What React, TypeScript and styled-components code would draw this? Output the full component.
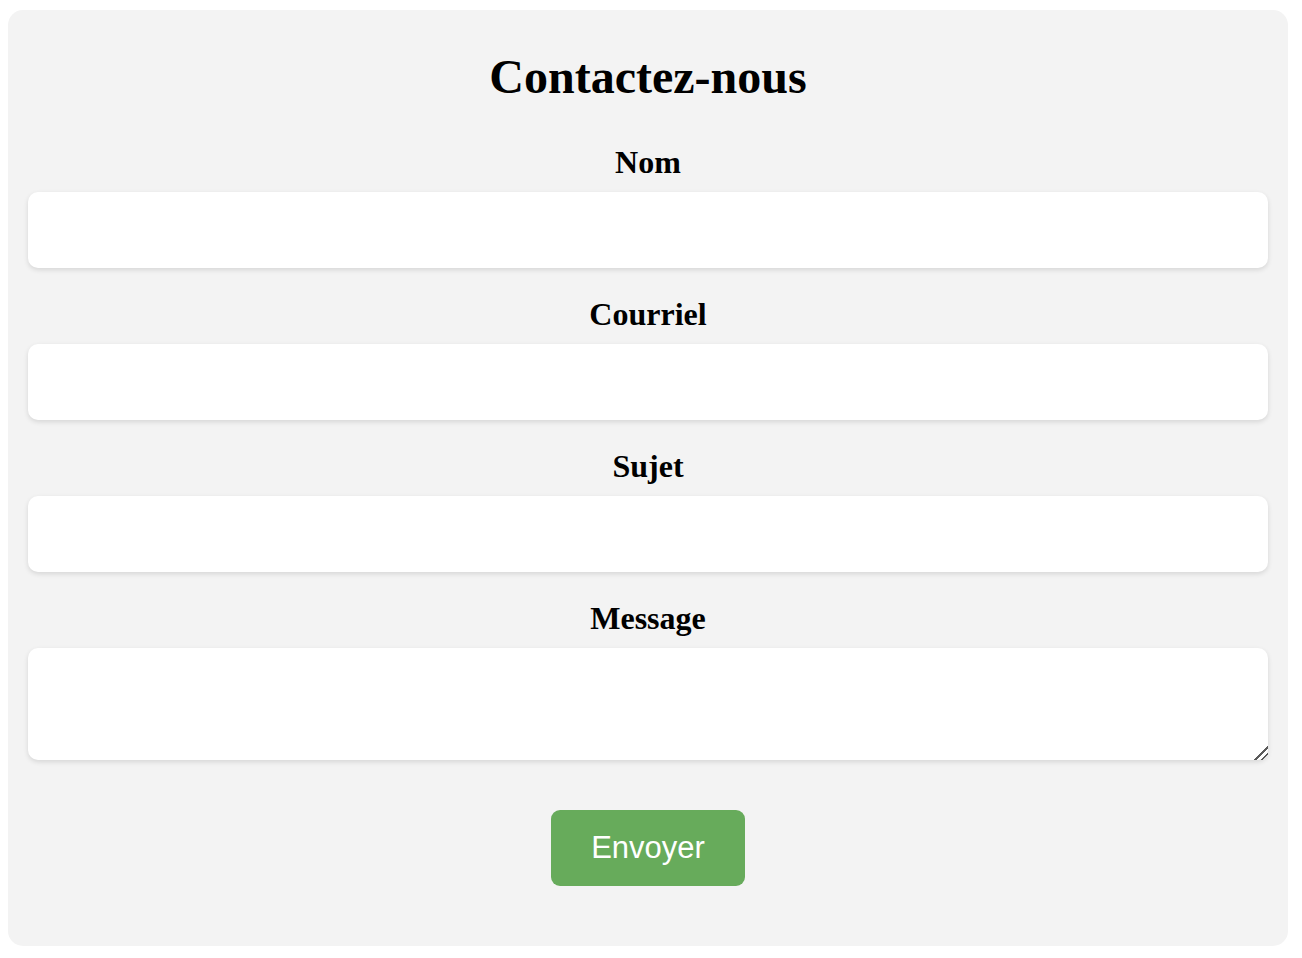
import React from "react";
import styled, { createGlobalStyle } from "styled-components";

const Global = createGlobalStyle`
  html, body { background: #ffffff; }
  body {
    margin: 10px 14px 12px 8px;
    font-family: "Liberation Serif", "Times New Roman", serif;
    color: #000;
  }
`;

const Card = styled.div`
  background: #f3f3f3;
  border-radius: 15px;
  padding: 39px 20px 60px;
  display: flex;
  flex-direction: column;
  align-items: stretch;
`;

const Title = styled.h1`
  margin: 0;
  font-size: 48px;
  line-height: 55px;
  font-weight: 700;
  text-align: center;
`;

const Form = styled.form`
  display: flex;
  flex-direction: column;
  margin-top: 42px;
  gap: 30px;
`;

const Field = styled.div`
  display: flex;
  flex-direction: column;
  gap: 13px;
`;

const Label = styled.label`
  font-size: 32px;
  line-height: 33px;
  font-weight: 700;
  text-align: center;
`;

const inputBase = `
  box-sizing: border-box;
  width: 100%;
  border: none;
  outline: none;
  background: #ffffff;
  border-radius: 10px;
  box-shadow: 0 2px 5px rgba(0, 0, 0, 0.12);
  padding: 10px 14px;
  font-family: "Liberation Sans", Arial, sans-serif;
  font-size: 18px;
`;

const Input = styled.input`
  ${inputBase}
  height: 76px;
`;

const TextArea = styled.textarea`
  ${inputBase}
  height: 112px;
  display: block;
  resize: vertical;
  &::-webkit-resizer {
    background: linear-gradient(
      135deg,
      transparent 0 52%,
      #5a5a5a 52% 60%,
      transparent 60% 74%,
      #5a5a5a 74% 82%,
      transparent 82%
    );
  }
`;

const Actions = styled.div`
  display: flex;
  justify-content: center;
  margin-top: 20px;
`;

const Button = styled.button`
  box-sizing: border-box;
  width: 194px;
  height: 76px;
  border: none;
  border-radius: 9px;
  background: #67ab5b;
  color: #ffffff;
  font-family: "Liberation Sans", Arial, sans-serif;
  font-size: 31px;
  cursor: pointer;
`;

export default function App() {
  return (
    <>
      <Global />
      <Card>
        <Title>Contactez-nous</Title>
        <Form onSubmit={(e) => e.preventDefault()}>
          <Field>
            <Label htmlFor="nom">Nom</Label>
            <Input id="nom" type="text" />
          </Field>
          <Field>
            <Label htmlFor="courriel">Courriel</Label>
            <Input id="courriel" type="email" />
          </Field>
          <Field>
            <Label htmlFor="sujet">Sujet</Label>
            <Input id="sujet" type="text" />
          </Field>
          <Field>
            <Label htmlFor="message">Message</Label>
            <TextArea id="message" />
          </Field>
          <Actions>
            <Button type="submit">Envoyer</Button>
          </Actions>
        </Form>
      </Card>
    </>
  );
}
